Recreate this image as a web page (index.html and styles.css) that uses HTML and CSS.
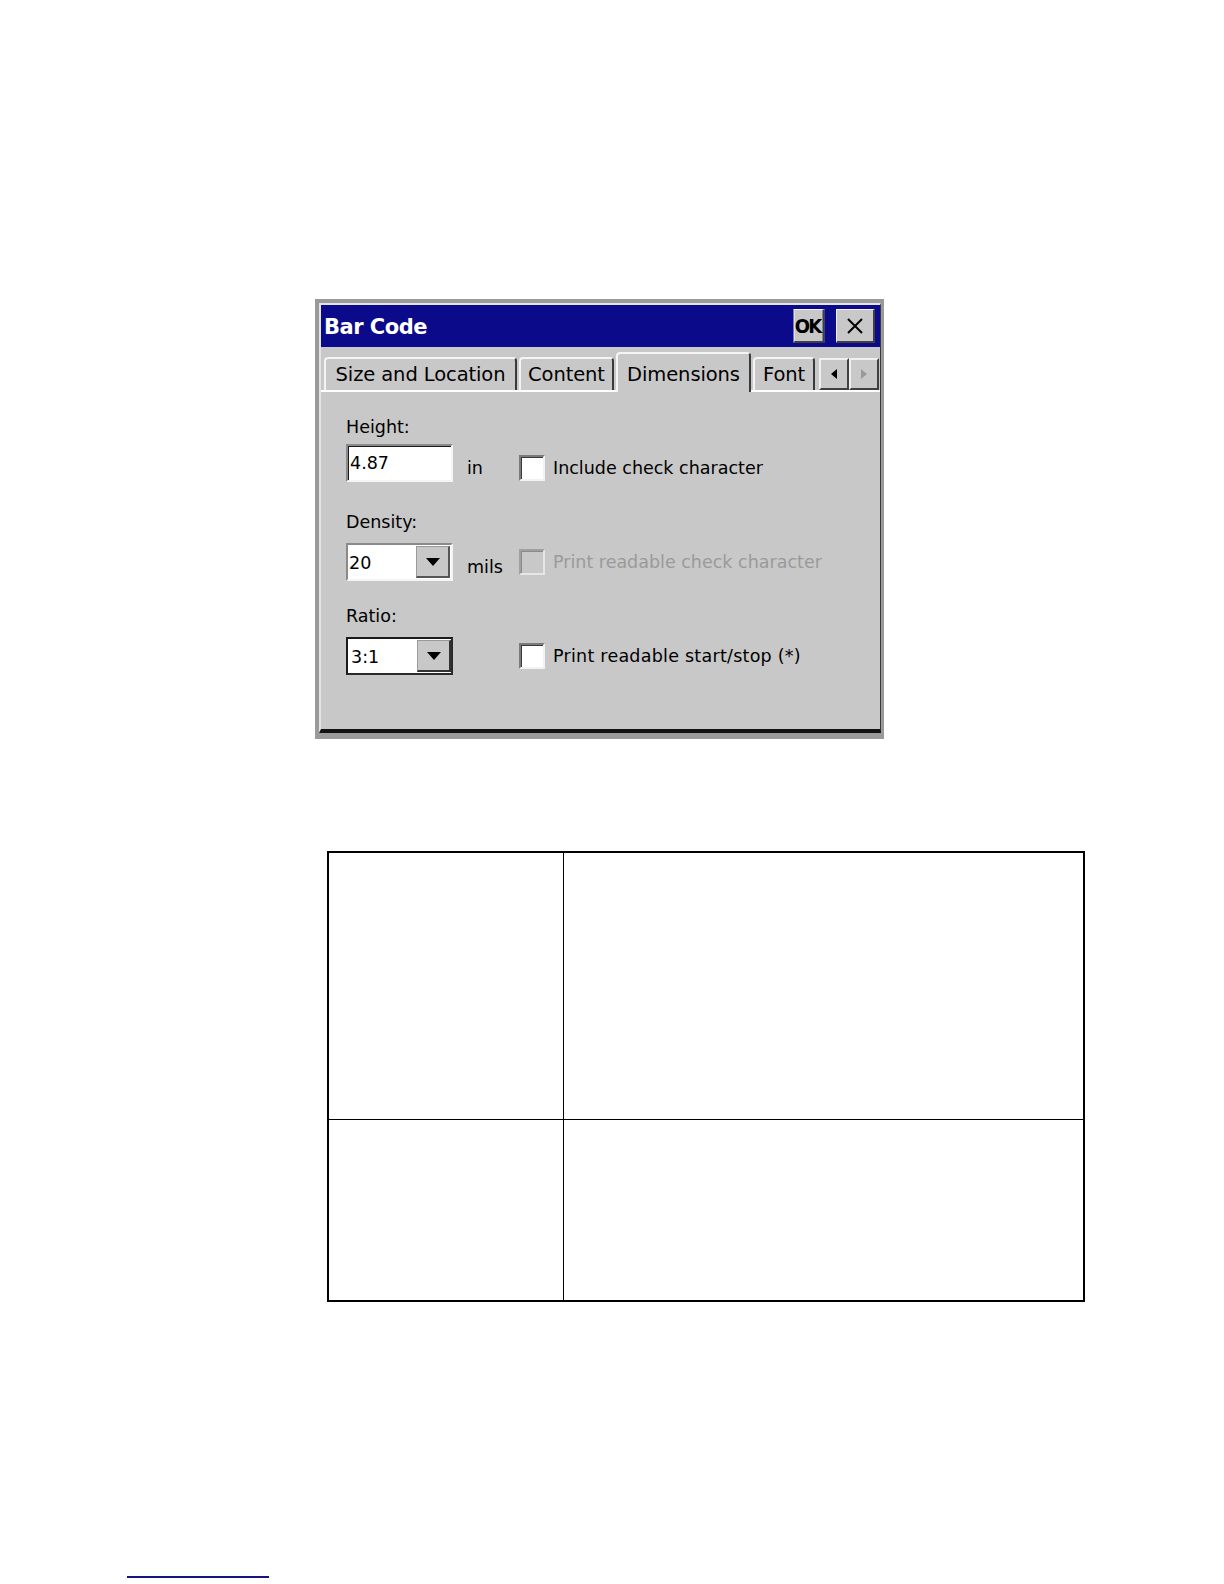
FILE: index.html
```html
<!DOCTYPE html>
<html lang="en">
<head>
<meta charset="utf-8">
<title>Bar Code</title>
<link rel="stylesheet" href="styles.css">
</head>
<body>
<div class="page">
  <div class="dialog">
    <div class="window">
      <div class="titlebar">
        <span class="title">Bar Code</span>
        <span class="tb-btn ok">OK</span>
        <span class="tb-btn close">
          <svg width="18" height="18" viewBox="0 0 18 18"><path d="M2 2 L16 16 M16 2 L2 16" stroke="#000" stroke-width="2" fill="none"/></svg>
        </span>
      </div>
      <div class="tabs">
        <span class="tab w1">Size and Location</span>
        <span class="tab w2">Content</span>
        <span class="tab sel w3">Dimensions</span>
        <span class="tab w4">Font</span>
        <span class="scroller">
          <span class="sbtn"><svg width="6" height="10" viewBox="0 0 6 10"><polygon points="6,0 6,10 0,5" fill="#000"/></svg></span>
          <span class="sbtn"><svg width="6" height="10" viewBox="0 0 6 10"><polygon points="0,0 0,10 6,5" fill="#9a9a9a"/></svg></span>
        </span>
      </div>
      <div class="panel">
        <div class="group g1">
          <div class="label">Height:</div>
          <div class="row">
            <div class="field"><span class="value">4.87</span></div>
            <span class="unit">in</span>
            <label class="opt low"><span class="check"></span><span>Include check character</span></label>
          </div>
        </div>
        <div class="group g2">
          <div class="label">Density:</div>
          <div class="row">
            <div class="combo"><span class="value">20</span><span class="drop"><svg width="14" height="8" viewBox="0 0 14 8"><polygon points="0,0 14,0 7,8" fill="#000"/></svg></span></div>
            <span class="unit">mils</span>
            <label class="opt disabled"><span class="check"></span><span>Print readable check character</span></label>
          </div>
        </div>
        <div class="group g3">
          <div class="label">Ratio:</div>
          <div class="row">
            <div class="combo focus"><span class="value">3:1</span><span class="drop"><svg width="14" height="8" viewBox="0 0 14 8"><polygon points="0,0 14,0 7,8" fill="#000"/></svg></span></div>
            <span class="unit"></span>
            <label class="opt"><span class="check"></span><span class="wide">Print readable start/stop (*)</span></label>
          </div>
        </div>
      </div>
    </div>
  </div>

  <div class="tbl">
    <div class="cell c1"></div>
    <div class="cell c2"></div>
    <div class="cell c3"></div>
    <div class="cell c4"></div>
  </div>

  <div class="footnote-rule"></div>
</div>
</body>
</html>
```
FILE: styles.css
```css
body {
  margin: 0;
  background: #fff;
  font-family: "DejaVu Sans", "Liberation Sans", sans-serif;
  color: #000;
}

.page {
  padding-top: 299px;
  height: 1584px;
  box-sizing: border-box;
}

.dialog {
  margin-left: 315px;
  width: 569px;
  box-sizing: border-box;
  border-style: solid;
  border-color: #9a9a9a;
  border-width: 4px 3px 6px 4px;
  background: #c8c8c8;
}

.window {
  border-style: solid;
  border-width: 2px 1px 4px 2px;
  border-color: #e4e4e4 #3a3a3a #111 #e4e4e4;
}

.titlebar {
  height: 42px;
  display: flex;
  align-items: center;
  padding: 0 5px 0 3px;
  background: #0a0a8a;
}

.title {
  flex: 1;
  color: #fff;
  font-weight: bold;
  font-size: 21px;
  letter-spacing: -0.5px;
  padding-top: 1px;
}

.tb-btn {
  height: 34px;
  box-sizing: border-box;
  display: flex;
  align-items: center;
  justify-content: center;
  background: #c8c8c8;
  border-style: solid;
  border-width: 1px 2px 2px 1px;
  border-color: #f0f0f0 #404040 #404040 #f0f0f0;
}

.ok {
  width: 34px;
  font-weight: bold;
  font-size: 20px;
  letter-spacing: -2px;
  padding-right: 2px;
  transform: scaleX(0.9);
}

.close {
  width: 39px;
  margin-left: 10px;
}

.tabs {
  display: flex;
  align-items: flex-end;
  height: 37px;
  margin-top: 6px;
  padding-left: 3px;
  border-bottom: 2px solid #fff;
}

.tab {
  height: 33px;
  box-sizing: border-box;
  display: flex;
  align-items: center;
  justify-content: center;
  margin-right: 2px;
  font-size: 19.5px;
  letter-spacing: -0.1px;
  border-style: solid;
  border-width: 2px 2px 0 2px;
  border-color: #f4f4f4 #3a3a3a #f4f4f4 #f4f4f4;
  border-radius: 4px 4px 0 0;
  background: #c8c8c8;
}

.tab.sel {
  height: 40px;
  margin-bottom: -2px;
  padding-top: 2px;
  position: relative;
}

.w1 { width: 193px; }
.w2 { width: 95px; }
.w3 { width: 135px; }
.w4 { width: 62px; }

.scroller {
  display: flex;
  margin-left: 2px;
}

.sbtn {
  width: 30px;
  height: 32px;
  box-sizing: border-box;
  display: flex;
  align-items: center;
  justify-content: center;
  border-style: solid;
  border-width: 2px;
  border-color: #f0f0f0 #404040 #404040 #f0f0f0;
  background: #c8c8c8;
}

.panel {
  height: 337px;
  box-sizing: border-box;
  padding: 24px 0 0 25px;
  font-size: 17.5px;
}

.label {
  line-height: 22px;
}

.g1 .label { margin-bottom: 6px; }
.g2 { margin-top: 29px; }
.g2 .label { margin-bottom: 10px; }
.g3 { margin-top: 24px; }
.g3 .label { margin-bottom: 10px; }

.row {
  display: flex;
  align-items: center;
  height: 38px;
}

.field,
.combo {
  width: 107px;
  height: 38px;
  box-sizing: border-box;
  background: #fff;
  border-style: solid;
  border-width: 2px;
  border-color: #8a8a8a #f4f4f4 #f4f4f4 #8a8a8a;
}

.field {
  box-shadow: inset 1px 1px 0 #1a1a1a;
  padding: 6px 0 0 2px;
}

.field .value {
  line-height: 22px;
}

.combo {
  display: flex;
  align-items: center;
  justify-content: space-between;
  padding-left: 1px;
}

.combo.focus {
  border-color: #1a1a1a #2a2a2a #2a2a2a #1a1a1a;
  padding-left: 3px;
}

.combo .value {
  line-height: 22px;
  padding-top: 2px;
}

.drop {
  width: 34px;
  height: 32px;
  box-sizing: border-box;
  display: flex;
  align-items: center;
  justify-content: center;
  background: #c8c8c8;
  border-style: solid;
  border-width: 1px 2px 2px 1px;
  border-color: #9a9a9a #555 #555 #9a9a9a;
  margin-right: 1px;
}

.focus .drop {
  margin-right: 0;
  border-color: #9a9a9a #333 #333 #9a9a9a;
}

.unit {
  width: 66px;
  box-sizing: border-box;
  padding-left: 14px;
  align-self: flex-end;
  line-height: 22px;
  margin-bottom: 3px;
}

.opt {
  display: flex;
  align-items: center;
  gap: 8px;
}

.opt.low {
  align-self: flex-end;
  margin-bottom: 1px;
}

.wide {
  letter-spacing: 0.25px;
}

.check {
  width: 26px;
  height: 26px;
  box-sizing: border-box;
  background: #fff;
  border-style: solid;
  border-width: 2px;
  border-color: #7a7a7a #f2f2f2 #f2f2f2 #7a7a7a;
  box-shadow: inset 1px 1px 0 #3a3a3a;
}

.opt.disabled {
  color: #9a9a9a;
}

.opt.disabled .check {
  background: #c8c8c8;
  border-color: #a0a0a0 #e6e6e6 #e6e6e6 #a0a0a0;
  box-shadow: inset 1px 1px 0 #8a8a8a;
}

.tbl {
  margin: 112px 0 0 327px;
  width: 758px;
  box-sizing: border-box;
  display: grid;
  grid-template-columns: 235px 1fr;
  grid-template-rows: 267px 180px;
  border: 2px solid #000;
}

.cell { box-sizing: border-box; }
.c1 { border-right: 1.5px solid #000; border-bottom: 1.5px solid #000; }
.c2 { border-bottom: 1.5px solid #000; }
.c3 { border-right: 1.5px solid #000; }

.footnote-rule {
  margin: 274px 0 0 127px;
  width: 142px;
  height: 2px;
  background: #14147e;
}
```
